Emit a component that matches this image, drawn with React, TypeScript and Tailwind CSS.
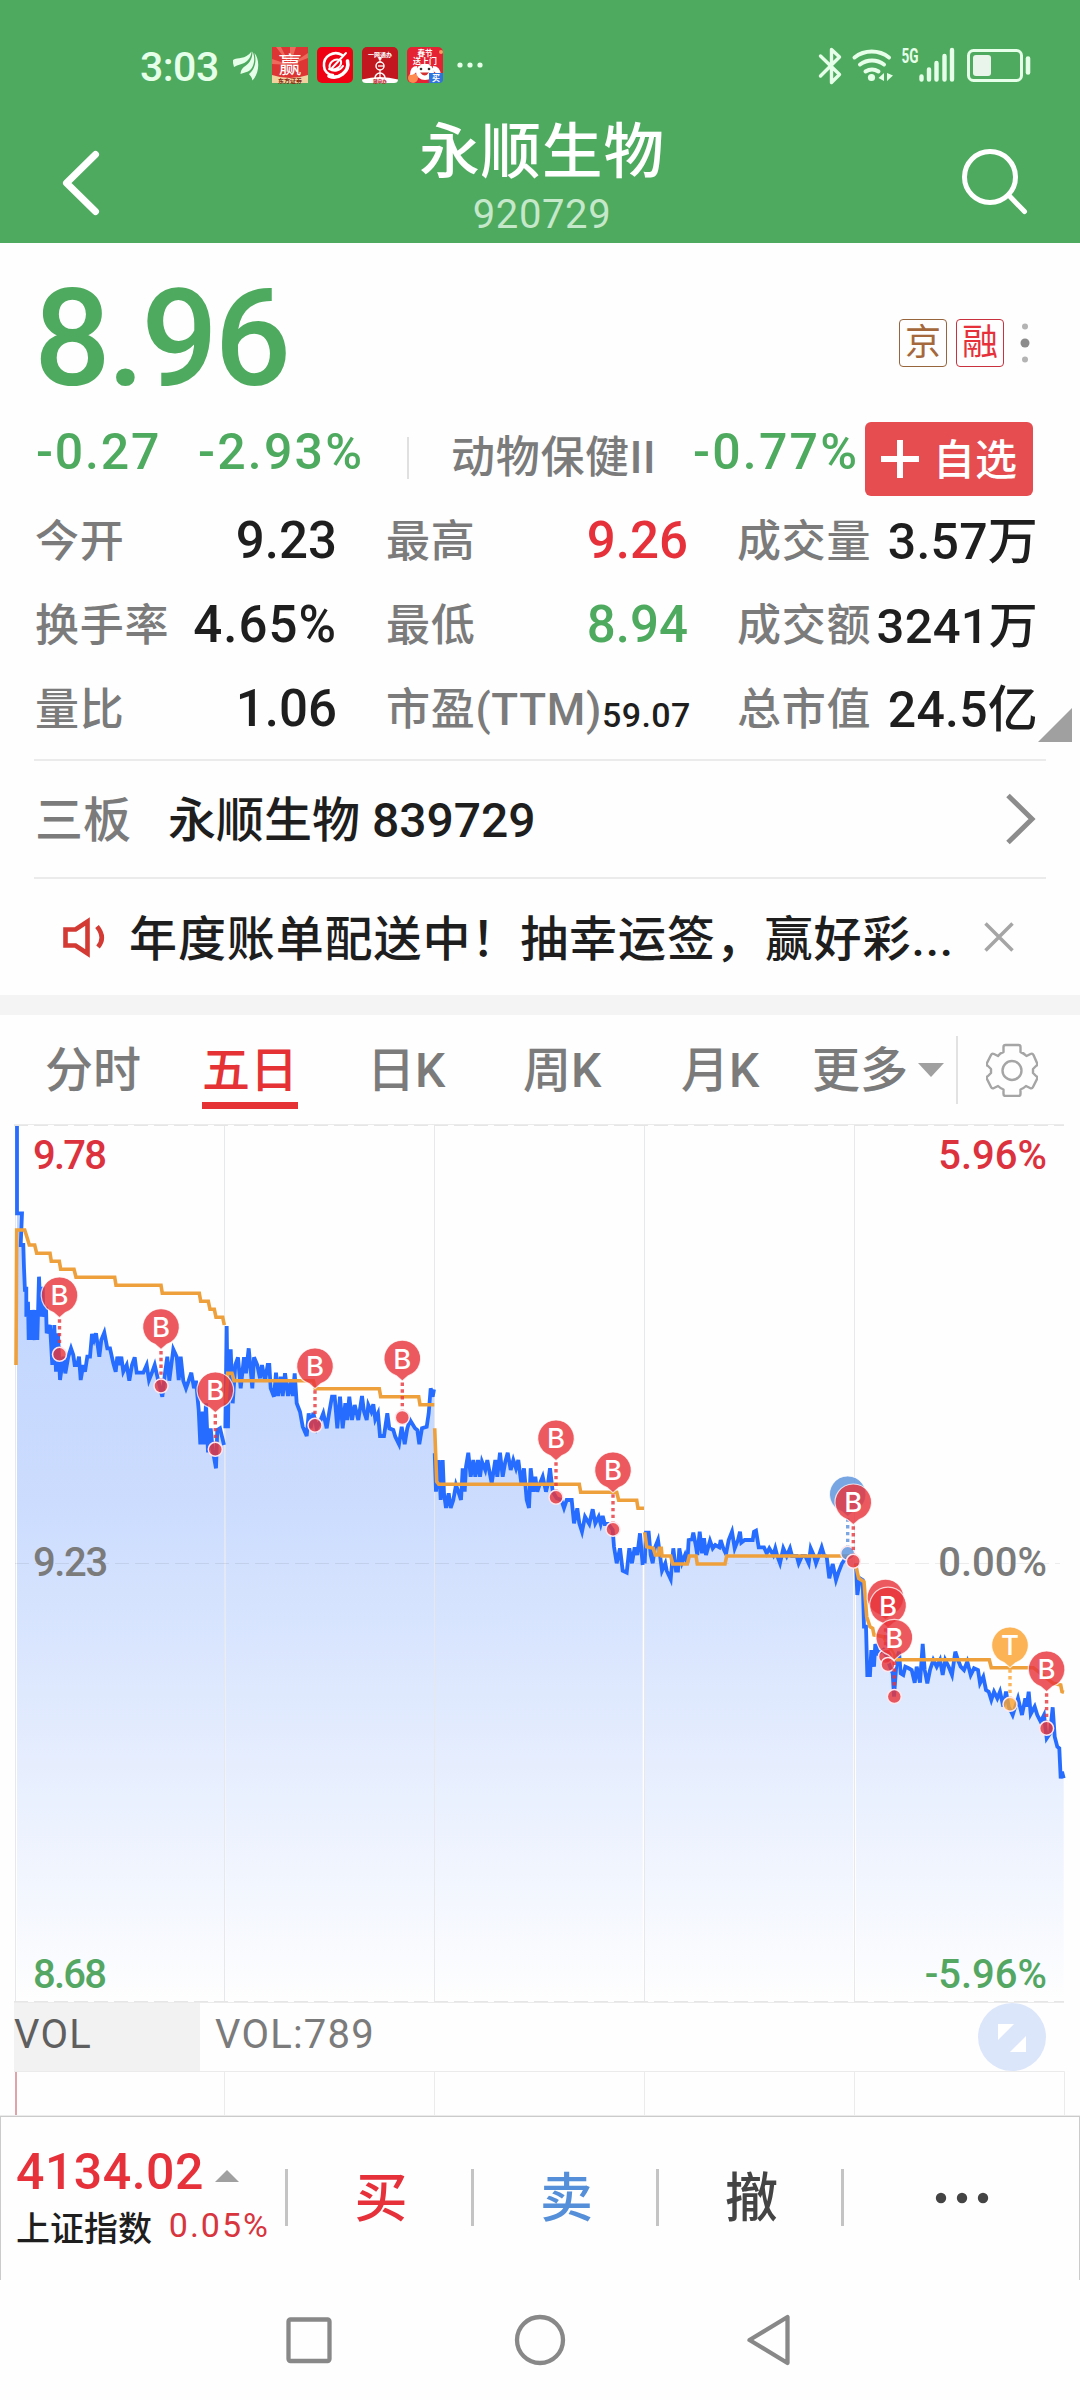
import React from 'react';
import clsx from 'clsx';

/* ---------- chart data ---------- */

interface Segment {
    ox: number;
    oy: number;
    pts: string;
}

// Device points are 3x, each segment has its own origin in page pixels
const PRICE: Segment[] = [
    {
        ox: 0,
        oy: 1110,
        pts: '51,48 51,310 66,310 62,405 70,405 72,475 75,545 79,530 79,620 84,575 86,690 90,600 94,690 98,600 104,690 108,600 112,690 117,500 122,620 128,530 130,620 138,590 140,670 150,645 157,765 163,645 168,785 174,670 180,810 190,740 196,790 205,740 213,715 220,735 224,765 232,765 237,740 242,810 250,765 255,785 262,740 270,740 276,672 282,690 288,670 298,740 304,690 313,668 322,715 330,715 340,760 347,785 352,740 358,765 364,740 370,785 380,765 388,812 396,765 404,742 410,788 430,788 440,765 447,810 455,790 464,765 475,812 487,860 495,790 502,740 508,812 520,718 530,740 536,810 542,740 550,812 558,835 566,812 574,788 582,835 588,812 596,900 601,1003 608,905 612,1003 618,880 624,1027 632,955 638,1020 648,1075 652,960 660,955 672,1005',
    },
    {
        ox: 0,
        oy: 1110,
        pts: '676,955 680,648 684,955 686,785 692,718 698,880 706,765 714,742 722,835 732,742 738,790 746,715 752,780 757,835 762,742 772,765 780,805 786,765 795,812 803,765 808,765 812,835 822,860 828,788 834,858 842,800 848,858 855,790 864,858 872,815 878,858 884,790 890,880 900,905 908,950 920,978 926,910 932,955 940,908 950,955 962,930 970,910 980,955 988,905 996,860 1004,860 1012,955 1020,860 1028,955 1036,880 1042,930 1048,860 1056,930 1064,885 1075,930 1086,858 1092,905 1100,930 1105,885 1114,905 1120,883 1126,928 1134,910 1140,978 1152,978 1162,910 1168,955 1180,960 1186,980 1197,1003 1205,950 1214,1003 1222,955 1230,930 1245,955 1252,960 1258,1003 1266,955 1280,950 1286,910 1292,835 1298,860 1302,838',
    },
    {
        ox: 400,
        oy: 1300,
        pts: '104,460 108,575 116,480 122,600 128,480 132,580 138,624 146,580 152,624 160,600 168,555 175,575 183,600 188,505 194,575 198,500 205,458 212,530 220,480 226,530 234,480 240,530 246,485 256,510 262,480 275,550 286,480 292,530 300,458 308,530 316,485 323,458 332,510 340,480 348,505 355,480 364,550 372,505 380,600 387,624 392,505 400,575 406,530 412,575 420,550 428,530 438,575 444,550 450,505 458,575 470,595 484,600 492,624 500,600 515,600 522,670 532,625 538,670 546,695 555,650 568,672 578,628 586,670 596,650 602,672 608,648 614,672 625,672 638,690 642,740 650,790 660,745 668,812 680,818 688,745 696,790 704,742 712,765 720,700 728,795',
    },
    {
        ox: 400,
        oy: 1300,
        pts: '734,790 738,698 746,698 752,765 758,790 764,745 774,720 780,765 786,812 796,790 800,812 812,838 820,745 828,812 834,812 838,745 846,788 855,765 862,788 866,720 876,718 880,698 888,740 892,765 899,695 906,760 912,715 918,765 930,722 938,745 946,735 958,742 962,720 970,745 978,762 986,720 996,695 1004,745 1014,720 1020,695 1024,728 1034,720 1058,720 1062,695 1068,692 1076,742 1092,742 1100,760 1108,745 1120,765 1126,745 1132,768 1140,790 1150,745 1160,768 1170,745 1176,768 1190,768 1196,790 1206,768 1216,768 1226,790 1232,745 1242,768 1248,790 1256,768 1265,742 1272,765 1280,770 1288,835 1298,792 1308,840 1316,815 1326,790 1340,770 1360,770',
    },
    {
        ox: 740,
        oy: 1440,
        pts: '348,370 352,465 360,415 368,420 372,560 378,560 382,705 390,705 394,630 402,680 406,612 414,640 430,630 440,650 450,680 458,700 462,770 470,660 477,635 482,700 490,705 496,680 506,685 515,690 524,728 530,680 540,728 548,612 554,690 562,730 570,690 580,660 590,680 600,660 608,705 616,660 626,680 636,705 646,635 654,660 662,680 672,690 682,665 692,705 702,685 714,690 720,730 730,710 738,750 746,755 754,780 762,755 772,775 780,755 790,800 798,755 806,800 818,825 826,800 834,775 846,825 856,775 860,800 866,755 872,822 884,800 892,825 902,845 912,825 920,895 930,880 938,802 944,890 952,920 958,925 962,1015 966,995 971,1015',
    },
];

const AVERAGE: Segment[] = [
    {
        ox: 0,
        oy: 1110,
        pts: '48,765 50,360 74,360 82,385 88,405 104,405 110,430 150,430 154,454 178,454 182,478 222,478 228,502 344,502 348,526 483,526 487,550 598,550 602,574 625,574 630,598 643,598 648,622 668,622 673,645',
    },
    {
        ox: 0,
        oy: 1110,
        pts: '678,880 683,790 696,790 702,812 940,812 946,836 1138,836 1142,860 1256,860 1260,884 1303,884',
    },
    {
        ox: 400,
        oy: 1300,
        pts: '104,385 110,545 116,553 538,553 542,577 650,577 656,601 710,601 714,625 732,625',
    },
    {
        ox: 400,
        oy: 1300,
        pts: '734,697 740,740 760,745 766,765 775,765 778,745 784,745 786,768 812,768 818,792 862,792 868,768 888,768 892,792 975,792 980,768 1355,768',
    },
    {
        ox: 740,
        oy: 1440,
        pts: '346,372 356,415 372,425 380,530 390,560 398,565 402,585 430,590 470,659 748,659 754,683 880,683 940,730 962,735 966,755 972,757',
    },
];

const BOTTOM = 2002;

const toPoints = ({ ox, oy, pts }: Segment) =>
    pts.split(' ').map((p) => {
        const [x, y] = p.split(',').map(Number);
        return [Number((ox + x / 3).toFixed(1)), Number((oy + y / 3).toFixed(1))];
    });

const linePath = (s: Segment) => 'M' + toPoints(s).map((p) => p.join(' ')).join('L');

const areaPath = (s: Segment) => {
    const pts = toPoints(s);
    return `${linePath(s)}L${pts[pts.length - 1][0]} ${BOTTOM}L${pts[0][0]} ${BOTTOM}Z`;
};

interface Marker {
    x: number;
    y: number;
    label?: string;
    color: string;
}

const RED = '#e8363c';

const MARKERS: Marker[] = [
    { x: 59.5, y: 1354.3, label: 'B', color: RED },
    { x: 161, y: 1386, label: 'B', color: RED },
    { x: 215.3, y: 1449.3, label: 'B', color: RED },
    { x: 315, y: 1425.3, label: 'B', color: RED },
    { x: 402.3, y: 1417.5, label: 'B', color: RED },
    { x: 556, y: 1497.3, label: 'B', color: RED },
    { x: 613, y: 1529.3, label: 'B', color: RED },
    { x: 847.7, y: 1553.3, color: '#5a92dd' },
    { x: 853.3, y: 1561.3, label: 'B', color: RED },
    { x: 885.5, y: 1656.5, color: RED },
    { x: 888, y: 1664.5, label: 'B', color: RED },
    { x: 894.3, y: 1696.6, label: 'B', color: RED },
    { x: 1010, y: 1704.3, label: 'T', color: '#fba22f' },
    { x: 1046.6, y: 1728.3, label: 'B', color: RED },
];

const Pin: React.FC<{ marker: Marker }> = ({ marker: { x, y, label, color } }) => (
    <g transform={`translate(${x} ${y - 59})`}>
        <path d="M0 24V52" stroke={color} strokeWidth="3.4" strokeDasharray="3.4 3.4" opacity="0.8" />
        <circle cy="59" r="7" fill={color} stroke="#fde8ee" strokeWidth="1.5" fillOpacity="0.82" />
        <path
            d="M-6 17.3A18.3 18.3 0 1 1 6 17.3L0 22.5Z"
            fill={color}
            fillOpacity="0.82"
            stroke="#fff"
            strokeOpacity="0.75"
            strokeWidth="1.2"
        />
        {label && (
            <text y="10" textAnchor="middle" fill="#fff" className="font-['Inter'] text-[27.5px] font-medium">
                {label}
            </text>
        )}
    </g>
);

const PriceChart: React.FC = () => (
    <svg viewBox="0 1124 1080 879" className="block h-[879px] w-[1080px]">
        <defs>
            <linearGradient id="area" gradientUnits="userSpaceOnUse" x1="0" y1="1125" x2="0" y2="2002">
                <stop offset="0" stopColor="#266dff" stopOpacity="0.31" />
                <stop offset="0.43" stopColor="#266dff" stopOpacity="0.235" />
                <stop offset="1" stopColor="#266dff" stopOpacity="0" />
            </linearGradient>
        </defs>
        {PRICE.map((s) => (
            <path key={s.pts} d={areaPath(s)} fill="url(#area)" />
        ))}
        <path d="M15.5 1124V2003M224.5 1124V2003M434.5 1124V2003M644.5 1124V2003M854.5 1124V2003" stroke="#e7e8ec" />
        <path d="M14 1124.5H1064M14 2002.5H1064" stroke="#ebebeb" />
        <path d="M14 1125.5H1064M14 2001.5H1064" stroke="#e6e6e6" strokeDasharray="14 6" />
        <path d="M15 1563.5H1060" stroke="#000" strokeOpacity="0.07" strokeDasharray="14 6" />
        {PRICE.map((s) => (
            <path key={s.pts} d={linePath(s)} fill="none" stroke="#266dff" strokeWidth="3.8" />
        ))}
        {AVERAGE.map((s) => (
            <path key={s.pts} d={linePath(s)} fill="none" stroke="#eea03c" strokeWidth="3.6" />
        ))}
        {MARKERS.map((m) => (
            <Pin key={`${m.x}-${m.y}`} marker={m} />
        ))}
    </svg>
);

/* ---------- status bar ---------- */

const AppIcons: React.FC = () => (
    <svg width="252" height="38" viewBox="232 46 252 38" className="font-['Noto_Sans_CJK_SC']">
        <g fill="#e6ffe9">
            <path d="M233 60C238 57 245 60 251.500 51.500C251 59 246 63 240 64.500Q237 65 234 67Q232.500 63 233 60Z" />
            <path d="M240.500 74C241 69 243 67.500 246 65.500C250 62.500 252.500 58 252.500 51.500C256.500 60 253 69 248 71.500Q244 72.500 240.500 74Z" />
            <path d="M252.500 80.500C252 77 250 75.500 249 74C254.500 70 257 62 254.500 53C260 60 259.500 73 252.500 80.500Z" />
        </g>
        <rect x="272" y="47" width="36" height="36" fill="#dd3434" />
        <path d="M290 65L276 47H281ZM290 65L290 47H296ZM290 65L308 53V58ZM290 65L272 59V64Z" fill="#ee6a5c" />
        <path d="M272 75q18 6 36 0v8h-36Z" fill="#f2d3a0" />
        <text x="290" y="73" fontSize="23" textAnchor="middle" fill="#fff">赢</text>
        <text x="290" y="82.500" fontSize="6" textAnchor="middle" fontWeight="700" fill="#8a2a12">东方证券</text>
        <rect x="317" y="47" width="36" height="36" rx="5" fill="#ef0012" />
        <g fill="none" stroke="#fff" strokeLinecap="round">
            <path d="M342 55C334 50 323 56 324 66C324 71 328 75 333 75" strokeWidth="2.600" />
            <path d="M347.500 61C350 72 338 80 329 76" strokeWidth="3.600" />
            <path d="M340 60C334 58 328 63 330 69C336 71 342 66 341 61M346 53L332 68M329 69C334 72 340 71 343 66" strokeWidth="2" />
        </g>
        <rect x="362" y="47" width="36" height="36" rx="5" fill="#c2171f" />
        <path d="M362 79.500q18-5 36 0q0 3.500-4 3.500h-28q-4 0-4-3.500Z" fill="#fff" />
        <text x="380" y="56.500" fontSize="6" textAnchor="middle" fontWeight="700" fill="#fff">一网通办</text>
        <path d="M380 57V78" stroke="#fff" strokeWidth="1.200" />
        <circle cx="380" cy="58.500" r="1.600" fill="#fff" />
        <circle cx="380" cy="66" r="4" fill="#c2171f" stroke="#fff" strokeWidth="1.500" />
        <path d="M378 66H384" stroke="#fff" strokeWidth="1.300" />
        <path d="M375 78a5 5 0 0 1 10 0" fill="none" stroke="#fff" strokeWidth="1.500" />
        <text x="380" y="82.500" fontSize="4.500" textAnchor="middle" fontWeight="700" fill="#c2171f">随申办</text>
        <rect x="407" y="47" width="36" height="36" rx="5" fill="#e52233" />
        <circle cx="413" cy="78" r="5" fill="#ff8a50" />
        <circle cx="441" cy="52" r="2" fill="#ff9a60" />
        <text x="425" y="55.500" fontSize="7.500" textAnchor="middle" fontWeight="700" fill="#fff">春节</text>
        <text x="425" y="64" fontSize="8" textAnchor="middle" fontWeight="700" fill="#fff">送上门</text>
        <ellipse cx="425" cy="72" rx="9" ry="8" fill="#fff" />
        <path d="M417 66q-7 0-7 9q5 0 8-5ZM433 66q7 0 8 9q-5 0-8-5Z" fill="#fff" />
        <circle cx="421" cy="69" r="1.300" fill="#333" />
        <circle cx="429" cy="69" r="1.300" fill="#333" />
        <path d="M420 72.500q5 6 9 0Z" fill="#d43131" />
        <path d="M429 73h14v6q0 4-4 4h-10Z" fill="#2f74dd" />
        <text x="436" y="81" fontSize="8" textAnchor="middle" fontWeight="700" fill="#fff">买</text>
        <g fill="#e6ffe9">
            <circle cx="460" cy="65" r="2.600" />
            <circle cx="470" cy="65" r="2.600" />
            <circle cx="480" cy="65" r="2.600" />
        </g>
    </svg>
);

const SystemIcons: React.FC = () => (
    <svg width="214" height="40" viewBox="818 45 214 40" fill="none" stroke="#e6ffe9" strokeLinecap="round" strokeLinejoin="round">
        <path d="M820.500 56L839.500 74.500L831.500 82.500V49.500L839.500 57L820.500 76" strokeWidth="3.400" />
        <path d="M854.500 57.500A28 28 0 0 1 889 57.500M860 64.500A20 20 0 0 1 884 64.500M865.500 71.500A12 12 0 0 1 878.500 71.500" strokeWidth="4" />
        <circle cx="871.500" cy="77.500" r="3.600" fill="#e6ffe9" stroke="none" />
        <path d="M884 73V81L878.500 78ZM887 73V81L893 75.500Z" fill="#e6ffe9" stroke="none" />
        <path d="M921.500 76.500V79.500M929 69.500V79.500M936.500 63V79.500M944.500 56V79.500M952 50V79.500" strokeWidth="4.400" />
        <text x="901.500" y="63" textLength="17" lengthAdjust="spacingAndGlyphs" fill="#e6ffe9" stroke="none" className="font-['Roboto'] text-[21px] font-bold">
            5G
        </text>
        <rect x="968.500" y="50.500" width="53" height="30" rx="5" strokeWidth="3" />
        <rect x="973" y="55" width="18" height="21" rx="3" fill="#e9f5ea" stroke="none" />
        <path d="M1028 58.500V72.500" strokeWidth="4.600" />
    </svg>
);

/* ---------- page parts ---------- */

const Header: React.FC = () => (
    <header className="h-[243px] bg-[#4eaa5e]">
        <div className="flex h-[110px] items-center justify-between pt-5 pr-[48px] pl-[140px]">
            <div className="flex items-center">
                <span className="w-[92px] pt-1 text-[41px] leading-none font-medium tracking-[-0.5px] text-[#e6ffe9]">3:03</span>
                <AppIcons />
            </div>
            <SystemIcons />
        </div>
        <div className="flex h-[133px] justify-between pr-[48px] pl-[58px]">
            <svg width="72" height="80" viewBox="58 143 72 80" className="mt-[33px]" fill="none" stroke="#fff" strokeWidth="7" strokeLinecap="round" strokeLinejoin="round">
                <path d="M95.500 154.500L66.500 183L95.500 211.500" />
            </svg>
            <div className="flex flex-col items-center pt-[8px] pr-[6px]">
                <h1 className="text-[60.5px] leading-[69px] font-medium tracking-[0.9px] text-white">永顺生物</h1>
                <span className="mt-[6px] text-[40px] leading-[44px] tracking-[0.6px] text-[#c5e8ca]">920729</span>
            </div>
            <svg width="72" height="76" viewBox="960 144 72 76" className="mt-[34px]" fill="none" stroke="#fff" strokeWidth="5" strokeLinecap="round">
                <circle cx="990" cy="177" r="25.500" />
                <path d="M1009 195.500L1024.500 211.500" />
            </svg>
        </div>
    </header>
);

const Stat: React.FC<{ label: string; value: string; className?: string }> = ({ label, value, className }) => (
    <div className="flex h-[84px] items-center justify-between whitespace-nowrap">
        <span className="pt-[3px] text-[44px] leading-none font-medium tracking-[0.7px] text-[#7b7b7b]">{label}</span>
        <span className={clsx('leading-none font-medium', className)}>{value}</span>
    </div>
);

const Quote: React.FC = () => (
    <section>
        <div className="flex h-[175px] items-center justify-between pt-[18px] pr-[49px] pl-[34px]">
            <span className="text-[135px] leading-none font-medium tracking-[-3.5px] text-[#4eaa5e]">8.96</span>
            <div className="flex items-center gap-[9px] pt-[7px]">
                <span className="flex size-[48px] items-center justify-center rounded-[4px] border-[1.5px] border-[#96653c] text-[36px] leading-none text-[#a5683c]">京</span>
                <span className="flex size-[48px] items-center justify-center rounded-[4px] border-[1.5px] border-[#c8313d] text-[36px] leading-none text-[#e6303a]">融</span>
                <svg width="12" height="40" viewBox="0 0 12 40" className="ml-[6px]" fill="#b4b4b4">
                    <circle cx="6" cy="3.500" r="3" />
                    <circle cx="6" cy="20" r="4.500" fill="#8c8c8c" />
                    <circle cx="6" cy="36.500" r="3" />
                </svg>
            </div>
        </div>
        <div className="flex h-[80px] items-center pl-[36px] whitespace-nowrap">
            <span className="w-[162px] pb-[12px] text-[50px] leading-none font-medium tracking-[1.8px] text-[#4eaa5e]">-0.27</span>
            <span className="w-[209px] pb-[12px] text-[50px] leading-none font-medium tracking-[2.2px] text-[#4eaa5e]">-2.93%</span>
            <span className="h-[42px] w-[2px] bg-[#e0e0e0]" />
            <span className="ml-[42px] w-[242px] text-[44px] leading-none font-medium tracking-[0.7px] text-[#7b7b7b]">动物保健II</span>
            <span className="w-[172px] pb-[12px] text-[50px] leading-none font-medium tracking-[2.2px] text-[#4eaa5e]">-0.77%</span>
            <button className="mt-[2px] flex h-[74px] w-[168px] items-center gap-[14px] rounded-[6px] bg-[#e54d50] pl-[16px] text-white">
                <svg width="38" height="38" viewBox="0 0 38 38" stroke="#fff" strokeWidth="6">
                    <path d="M0 19H38M19 0V38" />
                </svg>
                <span className="pt-[4px] text-[42px] leading-none font-medium">自选</span>
            </button>
        </div>
        <div className="flex h-[261px] text-[#1e1e1e]">
            <div className="ml-[35px] w-[302px]">
                <Stat label="今开" value="9.23" className="text-[51px]" />
                <Stat label="换手率" value="4.65%" className="text-[51px] tracking-[1px]" />
                <Stat label="量比" value="1.06" className="text-[51px]" />
            </div>
            <div className="ml-[49px] w-[302px]">
                <Stat label="最高" value="9.26" className="text-[51px] text-[#e6303a]" />
                <Stat label="最低" value="8.94" className="text-[51px] text-[#4eaa5e]" />
                <Stat label="市盈(TTM)" value="59.07" className="pt-[14px] text-[34px] tracking-[0.4px]" />
            </div>
            <div className="ml-[49px] w-[301px]">
                <Stat label="成交量" value="3.57万" className="pt-[4px] text-[50px] tracking-[0.2px]" />
                <Stat label="成交额" value="3241万" className="pt-[4px] text-[49px] tracking-[0.2px]" />
                <Stat label="总市值" value="24.5亿" className="pt-[4px] text-[50px] tracking-[0.2px]" />
            </div>
            <svg width="34" height="34" viewBox="0 0 34 34" className="mt-[210px]" fill="#a0a0a0">
                <path d="M34 0V34H0Z" />
            </svg>
        </div>
    </section>
);

const Links: React.FC = () => (
    <section>
        <div className="mx-[34px] flex h-[118px] items-center border-t-2 border-[#ebebeb] pr-[10px] pl-px">
            <span className="w-[133px] pt-[4px] text-[48px] leading-none font-medium text-[#7b7b7b]">三板</span>
            <span className="flex-1 pt-[4px] text-[48px] leading-none font-medium text-[#1e1e1e]">永顺生物 839729</span>
            <svg width="32" height="52" viewBox="0 0 32 52" fill="none" stroke="#8c8c8c" strokeWidth="5">
                <path d="M4 2.500L28 26L4 49.500" />
            </svg>
        </div>
        <div className="mx-[34px] flex h-[118px] items-center border-t-2 border-[#ebebeb] pr-[32px] pl-[28px]">
            <svg width="46" height="42" viewBox="62 916 46 42" fill="none" stroke="#d43a34" strokeWidth="4.600">
                <path d="M65.500 929.500H75.500L87.500 921.500V953.500L75.500 945.500H65.500Z" />
                <path d="M97 926.500q9 11 1 20.500" />
            </svg>
            <span className="ml-[21px] flex-1 pt-[6px] text-[48px] leading-none font-medium tracking-[0.9px] whitespace-nowrap text-[#1e1e1e]">
                年度账单配送中！抽幸运签，赢好彩...
            </span>
            <svg width="30" height="30" viewBox="0 0 30 30" fill="none" stroke="#a5a5a5" strokeWidth="3.500">
                <path d="M1.500 1.500L28.500 28.500M28.500 1.500L1.500 28.500" />
            </svg>
        </div>
    </section>
);

const TABS = [
    { name: '分时', width: 'w-[157px]' },
    { name: '五日', width: 'w-[165px]', active: true },
    { name: '日K', width: 'w-[156px]' },
    { name: '周K', width: 'w-[158px]' },
    { name: '月K', width: 'w-[131px]' },
    { name: '更多', width: 'w-[106px]' },
];

const Tabs: React.FC = () => (
    <nav className="flex h-[109px] items-center border-0 pl-[45px] text-[48px] leading-none text-[#7b7b7b]">
        {TABS.map((tab) => (
            <div key={tab.name} className={clsx('flex h-full shrink-0', tab.width)}>
                <span
                    className={clsx(
                        'h-[94px] pt-[32px] font-medium whitespace-nowrap',
                        tab.active && 'border-b-[7px] border-[#e53235] text-[#e53235]',
                    )}
                >
                    {tab.name}
                </span>
            </div>
        ))}
        <svg width="26" height="14" viewBox="0 0 26 14" fill="#a0a0a0">
            <path d="M0 0H26L13 14Z" />
        </svg>
        <span className="ml-[12px] h-[68px] w-[2px] bg-[#e2e2e2]" />
        <svg width="52" height="54" viewBox="986 1042 52 54" className="ml-[28px]" fill="none" stroke="#a5a5a5" strokeWidth="2.400" strokeLinejoin="round">
            <path d="M1005.500 1044h13q2 0 2 2v5q3 1 6 4l4-2q2-1 3 1l3.500 8q1 2-1 3l-3 3v4l3 3q2 1 1 3l-4 8q-1 2-3 1l-4-2q-2 2-5.500 3.500v4.500q0 2-2 2h-13q-2 0-2-2v-4.500q-3.500-1.500-5.500-3.500l-4 2q-2 1-3-1l-4-8q-1-2 1-3l3-3v-4l-3-3q-2-1-1-3l4-8q1-2 3-1l4 2q2-3 5.500-4v-5q0-2 2-2Z" />
            <circle cx="1012" cy="1069.500" r="9.500" />
        </svg>
    </nav>
);

const Chart: React.FC = () => (
    <section className="text-[40px] leading-none font-medium">
        <div className="relative h-[879px]">
            <PriceChart />
            <span className="absolute top-[12px] left-[33px] tracking-[-1.8px] text-[#dc323e]">9.78</span>
            <span className="absolute top-[12px] right-[33px] text-[#dc323e]">5.96%</span>
            <span className="absolute top-[419px] left-[33px] tracking-[-1.4px] text-[#7b7b7b]">9.23</span>
            <span className="absolute top-[419px] right-[33px] text-[#7b7b7b]">0.00%</span>
            <span className="absolute top-[831px] left-[33px] tracking-[-1.8px] text-[#54a763]">8.68</span>
            <span className="absolute top-[831px] right-[33px] text-[#54a763]">-5.96%</span>
        </div>
        <div className="flex h-[68px] items-center pl-[14px] tracking-[1.2px] text-[#7b7b7b]">
            <span className="h-full w-[186px] bg-[#f2f2f2] pt-[12px] font-normal text-[#5f5f5f]">VOL</span>
            <span className="ml-[15px] h-full flex-1 pt-[12px] font-normal">VOL:789</span>
            <svg width="68" height="68" viewBox="0 0 68 68" className="mr-[34px]">
                <circle cx="34" cy="34" r="34" fill="#dce6fb" />
                <path d="M20 21H36L20 37ZM48 33V49H32Z" fill="#fff" />
            </svg>
        </div>
        <svg viewBox="0 0 1080 45" className="block h-[45px] w-[1080px]" fill="none" stroke="#ebebeb">
            <path d="M14 .5H1064.500V44M224.500 0V44M434.500 0V44M644.500 0V44M854.500 0V44M0 44.500H1080" />
            <path d="M16 1V44" stroke="#d6848d" strokeWidth="1.500" />
        </svg>
    </section>
);

const TradeBar: React.FC = () => (
    <footer className="flex h-[164px] items-start border border-b-0 border-[#cbcbcb] text-[53px] leading-none">
        <div className="w-[269px] pl-[15px]">
            <div className="flex items-center gap-[11px] pt-[30px] text-[50px] font-medium tracking-[0.5px] text-[#e6303a]">
                <span>4134.02</span>
                <svg width="24" height="12" viewBox="0 0 24 12" fill="#a0a0a0" className="mt-2">
                    <path d="M0 12L12 0L24 12Z" />
                </svg>
            </div>
            <div className="flex items-center justify-between pt-[11px] whitespace-nowrap">
                <span className="text-[34px] font-medium text-[#1e1e1e]">上证指数</span>
                <span className="pb-[7px] text-[34px] tracking-[2px] text-[#d8353f]">0.05%</span>
            </div>
        </div>
        <div className="mt-[52px] flex h-[57px] flex-1 items-center font-medium">
            <span className="ml-[15px] h-full w-[3px] bg-[#c4c4c4]" />
            <span className="w-[183px] pt-[4px] pl-[3px] text-center text-[#e6303a]">买</span>
            <span className="h-full w-[3px] bg-[#c4c4c4]" />
            <span className="w-[182px] pt-[4px] pl-[3px] text-center text-[#568fd9]">卖</span>
            <span className="h-full w-[3px] bg-[#c4c4c4]" />
            <span className="w-[182px] pt-[4px] pl-[3px] text-center text-[#444]">撤</span>
            <span className="h-full w-[3px] bg-[#c4c4c4]" />
            <svg width="54" height="12" viewBox="0 0 54 12" fill="#444" className="ml-[91px]">
                <circle cx="6" cy="6" r="5.200" />
                <circle cx="27" cy="6" r="5.200" />
                <circle cx="48" cy="6" r="5.200" />
            </svg>
        </div>
    </footer>
);

const SystemNav: React.FC = () => (
    <div className="flex h-[120px] items-center justify-center bg-[#fefefe]">
        <svg width="508" height="54" viewBox="286 2313 508 54" fill="none" stroke="#888" strokeWidth="4.300" strokeLinejoin="round">
            <rect x="288.500" y="2319.500" width="41" height="41.500" rx="2" />
            <circle cx="540" cy="2340" r="23" />
            <path d="M749.500 2340L787.500 2317V2363Z" />
        </svg>
    </div>
);

const App: React.FC = () => {
    return (
        <div className="h-[2400px] w-[1080px] overflow-hidden bg-[#fefefe] font-['Roboto','Noto_Sans_CJK_SC',sans-serif]">
            <Header />
            <Quote />
            <Links />
            <div className="h-5 bg-[#f4f4f4]" />
            <Tabs />
            <Chart />
            <TradeBar />
            <SystemNav />
        </div>
    );
};

export default App;
